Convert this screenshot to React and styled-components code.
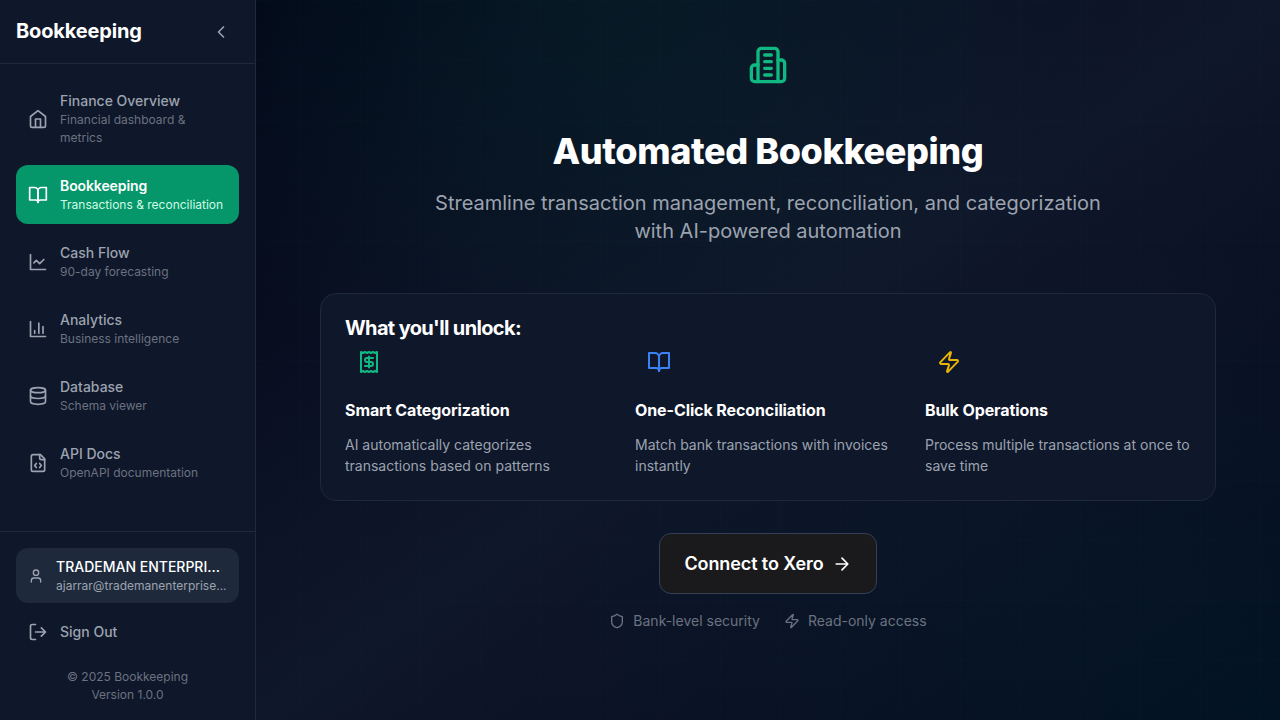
import React from 'react';
import styled, { createGlobalStyle } from 'styled-components';

const GlobalStyle = createGlobalStyle`
  * { box-sizing: border-box; margin: 0; padding: 0; }
  body {
    background: #020617;
    font-family: Inter, "Liberation Sans", sans-serif;
    -webkit-font-smoothing: antialiased;
  }
`;

const Shell = styled.div`
  display: flex;
  height: 100vh;
  overflow: hidden;
`;

const Sidebar = styled.aside`
  display: flex;
  flex-direction: column;
  flex: none;
  width: 256px;
  background: #0f172a;
  border-right: 1px solid #1e293b;
`;

const SidebarHeader = styled.header`
  display: flex;
  align-items: center;
  justify-content: space-between;
  height: 64px;
  padding: 0 24px 2px 16px;
  border-bottom: 1px solid #1e293b;
`;

const Brand = styled.h2`
  color: #fff;
  font-size: 20px;
  line-height: 28px;
  font-weight: 700;
  letter-spacing: -0.15px;
`;

const CollapseButton = styled.button`
  display: flex;
  border: 0;
  background: none;
  padding: 2px 0 0;
  color: #9ca3af;
`;

const Nav = styled.nav`
  display: flex;
  flex-direction: column;
  gap: 8px;
  flex: 1;
  padding: 16px;
`;

const NavItem = styled.a`
  display: flex;
  align-items: center;
  gap: 12px;
  padding: 10px 12px;
  border-radius: 12px;
  color: ${(p) => (p.$active ? '#fff' : '#9ca3af')};
  background: ${(p) => (p.$active ? '#059669' : 'transparent')};
  svg { flex: none; }
`;

const NavTitle = styled.div`
  font-size: 14px;
  line-height: 21px;
  font-weight: ${(p) => (p.$active ? 600 : 500)};
  letter-spacing: ${(p) => (p.$active ? '-0.1px' : 0)};
`;

const NavHint = styled.div`
  font-size: 12px;
  line-height: 18px;
  color: ${(p) => (p.$active ? '#d1fae5' : '#6b7280')};
`;

const SidebarFooter = styled.footer`
  display: flex;
  flex-direction: column;
  height: 189px;
  padding: 16px;
  border-top: 1px solid #1e293b;
`;

const UserCard = styled.div`
  display: flex;
  align-items: center;
  gap: 12px;
  height: 55px;
  padding: 0 12px;
  border-radius: 12px;
  background: #1e293b;
  color: #9ca3af;
  svg { flex: none; }
`;

const UserText = styled.div`
  min-width: 0;
`;

const UserName = styled.div`
  overflow: hidden;
  text-overflow: ellipsis;
  white-space: nowrap;
  color: #fff;
  font-size: 14px;
  line-height: 20px;
  font-weight: 500;
`;

const UserEmail = styled(UserName)`
  color: #9ca3af;
  font-size: 12px;
  line-height: 17px;
  font-weight: 400;
`;

const SignOut = styled.button`
  display: flex;
  align-items: center;
  gap: 12px;
  height: 42px;
  margin-top: 8px;
  padding: 0 12px;
  border: 0;
  background: none;
  color: #9ca3af;
  font: 500 14px/20px Inter, sans-serif;
`;

const Legal = styled.p`
  margin-top: 15px;
  color: #6b7280;
  font-size: 12px;
  line-height: 18px;
  text-align: center;
`;

const Main = styled.main`
  flex: 1;
  min-width: 0;
  display: flex;
  flex-direction: column;
  align-items: center;
  padding: 41px 64px 0;
  background:
    repeating-linear-gradient(90deg, transparent 0 44px, rgba(16, 185, 129, 0.015) 44px 45px, transparent 45px 60px),
    repeating-linear-gradient(180deg, rgba(16, 185, 129, 0.015) 0 1px, transparent 1px 60px),
    radial-gradient(ellipse 520px 420px at 34% 0%, rgba(16, 185, 129, 0.08), transparent),
    radial-gradient(ellipse 760px 480px at 100% 100%, rgba(8, 125, 135, 0.11), transparent),
    linear-gradient(to bottom right, #020617 0%, #0f172a 50%, #020617 100%);
`;

const HeroIcon = styled.div`
  display: flex;
  align-items: center;
  height: 48px;
  color: #10b981;
`;

const HeroTitle = styled.h1`
  margin-top: 40px;
  color: #fff;
  font-size: 36px;
  line-height: 45px;
  font-weight: 800;
  letter-spacing: -0.4px;
`;

const HeroText = styled.p`
  max-width: 672px;
  margin-top: 15px;
  color: #9ca3af;
  font-size: 20px;
  line-height: 28px;
  text-align: center;
`;

const Card = styled.section`
  width: 896px;
  height: 208px;
  margin-top: 48px;
  padding: 20px 24px;
  border: 1px solid #1e293b;
  border-radius: 16px;
  background: #0f172a;
`;

const CardTitle = styled.h3`
  color: #fff;
  font-size: 20px;
  line-height: 28px;
  font-weight: 700;
  letter-spacing: -0.65px;
`;

const Features = styled.div`
  display: grid;
  grid-template-columns: repeat(3, 1fr);
  gap: 24px;
`;

const FeatureIcon = styled.div`
  display: flex;
  align-items: center;
  height: 40px;
  padding-left: 12px;
  color: ${(p) => p.$color};
`;

const FeatureTitle = styled.h4`
  margin-top: 16px;
  color: #fff;
  font-size: 16px;
  line-height: 24px;
  font-weight: 700;
  letter-spacing: -0.1px;
`;

const FeatureText = styled.p`
  margin-top: 12px;
  color: #9ca3af;
  font-size: 14px;
  line-height: 21px;
`;

const ConnectButton = styled.button`
  display: flex;
  align-items: center;
  justify-content: center;
  gap: 8px;
  width: 218px;
  height: 61px;
  margin-top: 32px;
  border: 1px solid #334155;
  border-radius: 12px;
  background: #1a1a1c;
  color: #fff;
  font: 600 18px/28px Inter, sans-serif;
  letter-spacing: -0.1px;
`;

const Assurances = styled.div`
  display: flex;
  gap: 24px;
  margin-top: 16px;
`;

const Assurance = styled.span`
  display: flex;
  align-items: center;
  gap: 8px;
  color: #6b7280;
  font-size: 14px;
  line-height: 21px;
`;

const shapes = {
  home: <><path d="m3 9 9-7 9 7v11a2 2 0 0 1-2 2H5a2 2 0 0 1-2-2z" /><path d="M9 22V12h6v10" /></>,
  book: <><path d="M2 3h6a4 4 0 0 1 4 4v14a3 3 0 0 0-3-3H2z" /><path d="M22 3h-6a4 4 0 0 0-4 4v14a3 3 0 0 1 3-3h7z" /></>,
  line: <><path d="M3 3v18h18" /><path d="m19 9-5 5-4-4-3 3" /></>,
  bars: <><path d="M3 3v18h18" /><path d="M18 17V9M13 17V5M8 17v-3" /></>,
  database: <><ellipse cx="12" cy="5" rx="9" ry="3" /><path d="M3 5v14a9 3 0 0 0 18 0V5" /><path d="M3 12a9 3 0 0 0 18 0" /></>,
  file: <><path d="M15 2H6a2 2 0 0 0-2 2v16a2 2 0 0 0 2 2h12a2 2 0 0 0 2-2V7Z" /><path d="M14 2v4a2 2 0 0 0 2 2h4" /><path d="m10 12.5-2 2.5 2 2.5M14 12.5l2 2.5-2 2.5" /></>,
  user: <><path d="M19 21v-2a4 4 0 0 0-4-4H9a4 4 0 0 0-4 4v2" /><circle cx="12" cy="7" r="4" /></>,
  logout: <><path d="M9 21H5a2 2 0 0 1-2-2V5a2 2 0 0 1 2-2h4" /><path d="m16 17 5-5-5-5M21 12H9" /></>,
  chevron: <path d="m15 18-6-6 6-6" />,
  building: <><path d="M6 22V4a2 2 0 0 1 2-2h8a2 2 0 0 1 2 2v18Z" /><path d="M6 12H4a2 2 0 0 0-2 2v6a2 2 0 0 0 2 2h2" /><path d="M18 9h2a2 2 0 0 1 2 2v9a2 2 0 0 1-2 2h-2" /><path d="M10 6h4M10 10h4M10 14h4M10 18h4" /></>,
  receipt: <><path d="M4 2v20l2-1 2 1 2-1 2 1 2-1 2 1 2-1 2 1V2l-2 1-2-1-2 1-2-1-2 1-2-1-2 1Z" /><path d="M16 8h-6a2 2 0 1 0 0 4h4a2 2 0 1 1 0 4H8" /><path d="M12 17.5v-11" /></>,
  zap: <path d="M4 14a1 1 0 0 1-.78-1.63l9.9-10.2a.5.5 0 0 1 .86.46l-1.92 6.02A1 1 0 0 0 13 10h7a1 1 0 0 1 .78 1.63l-9.9 10.2a.5.5 0 0 1-.86-.46l1.92-6.02A1 1 0 0 0 11 14z" />,
  arrow: <path d="M5 12h14M12 5l7 7-7 7" />,
  shield: <path d="M20 13c0 5-3.5 7.5-7.66 8.95a1 1 0 0 1-.67-.01C7.5 20.5 4 18 4 13V6a1 1 0 0 1 1-1c2 0 4.500-1.200 6.240-2.720a1.170 1.170 0 0 1 1.520 0C14.510 3.810 17 5 19 5a1 1 0 0 1 1 1z" />,
};

const Icon = ({ name, size = 20 }) => (
  <svg width={size} height={size} viewBox="0 0 24 24" fill="none" stroke="currentColor" strokeWidth="2" strokeLinecap="round" strokeLinejoin="round">
    {shapes[name]}
  </svg>
);

const navItems = [
  { icon: 'home', title: 'Finance Overview', hint: 'Financial dashboard & metrics' },
  { icon: 'book', title: 'Bookkeeping', hint: 'Transactions & reconciliation', active: true },
  { icon: 'line', title: 'Cash Flow', hint: '90-day forecasting' },
  { icon: 'bars', title: 'Analytics', hint: 'Business intelligence' },
  { icon: 'database', title: 'Database', hint: 'Schema viewer' },
  { icon: 'file', title: 'API Docs', hint: 'OpenAPI documentation' },
];

const features = [
  { icon: 'receipt', color: '#10b981', title: 'Smart Categorization', text: 'AI automatically categorizes transactions based on patterns' },
  { icon: 'book', color: '#3b82f6', title: 'One-Click Reconciliation', text: 'Match bank transactions with invoices instantly' },
  { icon: 'zap', color: '#eab308', title: 'Bulk Operations', text: 'Process multiple transactions at once to save time' },
];

export default function App() {
  return (
    <Shell>
      <GlobalStyle />
      <Sidebar>
        <SidebarHeader>
          <Brand>Bookkeeping</Brand>
          <CollapseButton aria-label="Collapse sidebar"><Icon name="chevron" /></CollapseButton>
        </SidebarHeader>
        <Nav>
          {navItems.map((item) => (
            <NavItem key={item.title} $active={item.active}>
              <Icon name={item.icon} />
              <div>
                <NavTitle $active={item.active}>{item.title}</NavTitle>
                <NavHint $active={item.active}>{item.hint}</NavHint>
              </div>
            </NavItem>
          ))}
        </Nav>
        <SidebarFooter>
          <UserCard>
            <Icon name="user" size={16} />
            <UserText>
              <UserName>TRADEMAN ENTERPRI...</UserName>
              <UserEmail>ajarrar@trademanenterprise...</UserEmail>
            </UserText>
          </UserCard>
          <SignOut><Icon name="logout" />Sign Out</SignOut>
          <Legal>© 2025 Bookkeeping<br />Version 1.0.0</Legal>
        </SidebarFooter>
      </Sidebar>
      <Main>
        <HeroIcon><Icon name="building" size={40} /></HeroIcon>
        <HeroTitle>Automated Bookkeeping</HeroTitle>
        <HeroText>Streamline transaction management, reconciliation, and categorization with AI-powered automation</HeroText>
        <Card>
          <CardTitle>What you'll unlock:</CardTitle>
          <Features>
            {features.map((f) => (
              <div key={f.title}>
                <FeatureIcon $color={f.color}><Icon name={f.icon} size={24} /></FeatureIcon>
                <FeatureTitle>{f.title}</FeatureTitle>
                <FeatureText>{f.text}</FeatureText>
              </div>
            ))}
          </Features>
        </Card>
        <ConnectButton>Connect to Xero <Icon name="arrow" /></ConnectButton>
        <Assurances>
          <Assurance><Icon name="shield" size={16} />Bank-level security</Assurance>
          <Assurance><Icon name="zap" size={16} />Read-only access</Assurance>
        </Assurances>
      </Main>
    </Shell>
  );
}
